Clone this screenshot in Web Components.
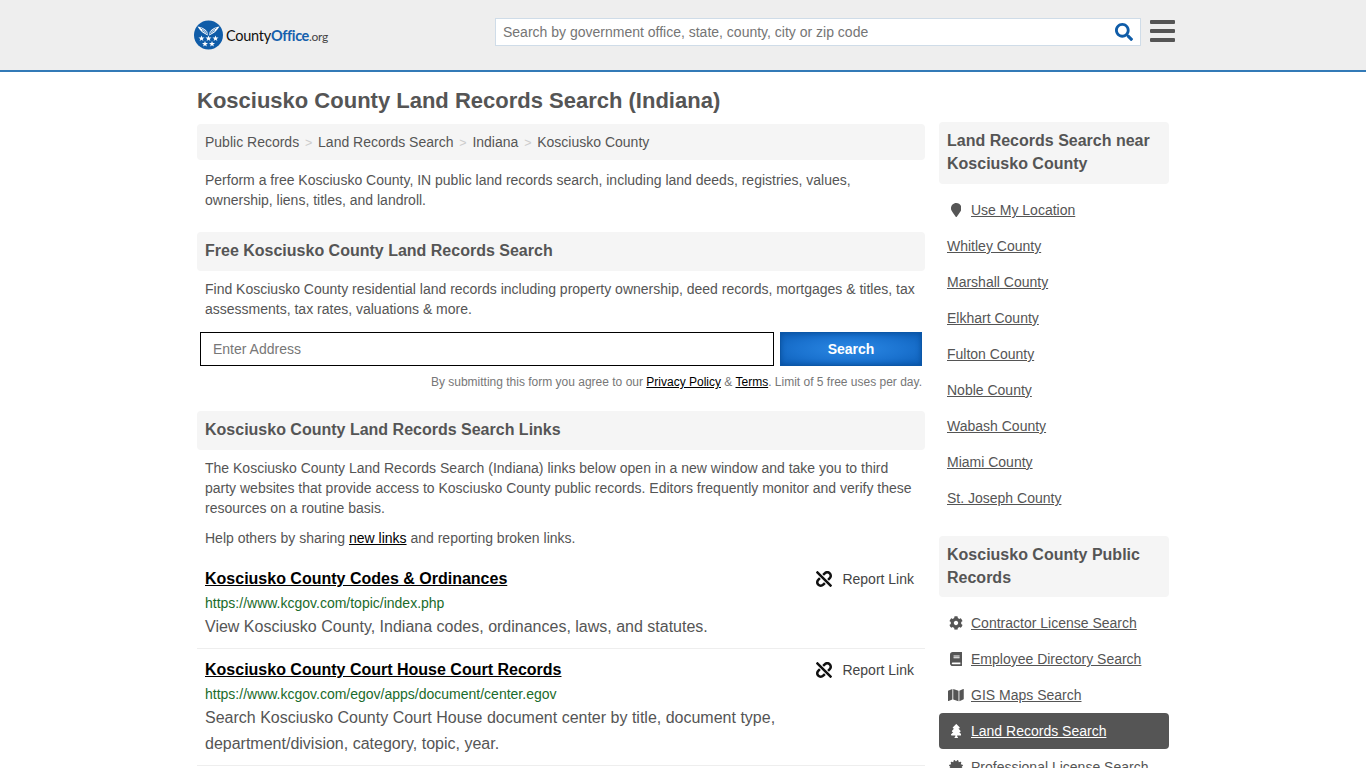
<!DOCTYPE html>
<html lang="en">
<head>
<meta charset="utf-8">
<title>Kosciusko County Land Records Search (Indiana)</title>
<style>
  html, body { margin: 0; padding: 0; overflow: hidden; height: 768px; background: #fff; }
  body { font-family: "Liberation Sans", Arial, sans-serif; font-size: 14px; color: #555; }
</style>
</head>
<body>
<site-header></site-header>
<page-layout>
  <h-title slot="title">Kosciusko County Land Records Search (Indiana)</h-title>

  <bread-crumbs slot="main"></bread-crumbs>
  <text-block slot="main" style="margin-top:10px">Perform a free Kosciusko County, IN public land records search, including land deeds, registries, values, ownership, liens, titles, and landroll.</text-block>

  <section-head slot="main" style="margin-top:22px">Free Kosciusko County Land Records Search</section-head>
  <text-block slot="main" style="margin-top:8px">Find Kosciusko County residential land records including property ownership, deed records, mortgages &amp; titles, tax assessments, tax rates, valuations &amp; more.</text-block>
  <address-form slot="main"></address-form>

  <section-head slot="main" style="margin-top:22px">Kosciusko County Land Records Search Links</section-head>
  <text-block slot="main" style="margin-top:8px">The Kosciusko County Land Records Search (Indiana) links below open in a new window and take you to third party websites that provide access to Kosciusko County public records. Editors frequently monitor and verify these resources on a routine basis.</text-block>
  <text-block slot="main" style="margin-top:10px">Help others by sharing <a href="#" style="color:#000">new links</a> and reporting broken links.</text-block>

  <link-result slot="main" style="margin-top:20px" heading="Kosciusko County Codes &amp; Ordinances" url="https://www.kcgov.com/topic/index.php">View Kosciusko County, Indiana codes, ordinances, laws, and statutes.</link-result>
  <link-result slot="main" heading="Kosciusko County Court House Court Records" url="https://www.kcgov.com/egov/apps/document/center.egov">Search Kosciusko County Court House document center by title, document type, department/division, category, topic, year.</link-result>

  <side-head slot="side">Land Records Search near Kosciusko County</side-head>
  <side-list slot="side" style="margin-top:8px">
    <side-item icon="marker">Use My Location</side-item>
    <side-item>Whitley County</side-item>
    <side-item>Marshall County</side-item>
    <side-item>Elkhart County</side-item>
    <side-item>Fulton County</side-item>
    <side-item>Noble County</side-item>
    <side-item>Wabash County</side-item>
    <side-item>Miami County</side-item>
    <side-item>St. Joseph County</side-item>
  </side-list>
  <side-head slot="side" style="margin-top:20px;padding-bottom:8px">Kosciusko County Public Records</side-head>
  <side-list slot="side" style="margin-top:8px">
    <side-item icon="cog">Contractor License Search</side-item>
    <side-item icon="book">Employee Directory Search</side-item>
    <side-item icon="map">GIS Maps Search</side-item>
    <side-item icon="tree" active>Land Records Search</side-item>
    <side-item icon="cert">Professional License Search</side-item>
  </side-list>
</page-layout>

<script>
// icon paths, all drawn from the same shapes used in the side list and the result rows
const ICONS = {
  marker: ['0 0 384 512', 'M172.268 501.67C26.97 291.031 0 269.413 0 192 0 85.961 85.961 0 192 0s192 85.961 192 192c0 77.413-26.97 99.031-172.268 309.67-9.535 13.774-29.93 13.773-39.464 0z'],
  cog: ['0 0 512 512', 'M487.4 315.7l-42.6-24.6c4.3-23.2 4.3-47 0-70.2l42.6-24.6c4.9-2.8 7.1-8.6 5.5-14-11.1-35.6-30-67.8-54.7-94.6-3.8-4.1-10-5.1-14.8-2.3L380.8 110c-17.9-15.4-38.5-27.3-60.8-35.1V25.8c0-5.6-3.9-10.5-9.4-11.7-36.7-8.2-74.3-7.8-109.2 0-5.5 1.2-9.4 6.1-9.4 11.7V75c-22.2 7.9-42.8 19.8-60.8 35.1L88.7 85.5c-4.9-2.8-11-1.9-14.8 2.3-24.7 26.7-43.6 58.9-54.7 94.6-1.7 5.4.6 11.2 5.5 14L67.3 221c-4.3 23.2-4.3 47 0 70.2l-42.6 24.6c-4.9 2.8-7.1 8.6-5.5 14 11.1 35.6 30 67.8 54.7 94.6 3.8 4.1 10 5.1 14.8 2.3l42.6-24.6c17.9 15.4 38.5 27.3 60.8 35.1v49.2c0 5.6 3.9 10.5 9.4 11.7 36.7 8.2 74.3 7.8 109.2 0 5.5-1.2 9.4-6.1 9.4-11.7v-49.2c22.2-7.9 42.8-19.8 60.8-35.1l42.6 24.6c4.9 2.8 11 1.9 14.8-2.3 24.7-26.7 43.6-58.9 54.7-94.6 1.5-5.5-.7-11.3-5.6-14.1zM256 336c-44.1 0-80-35.9-80-80s35.9-80 80-80 80 35.9 80 80-35.9 80-80 80z'],
  book: ['0 0 448 512', 'M448 360V24c0-13.3-10.7-24-24-24H96C43 0 0 43 0 96v320c0 53 43 96 96 96h328c13.3 0 24-10.7 24-24v-16c0-7.5-3.5-14.3-8.9-18.7-4.2-15.4-4.2-59.3 0-74.7 5.4-4.3 8.9-11.1 8.9-18.6zM128 134c0-3.3 2.7-6 6-6h212c3.3 0 6 2.7 6 6v20c0 3.3-2.7 6-6 6H134c-3.3 0-6-2.7-6-6v-20zm0 64c0-3.3 2.7-6 6-6h212c3.3 0 6 2.7 6 6v20c0 3.3-2.7 6-6 6H134c-3.3 0-6-2.7-6-6v-20zm253.4 250H96c-17.7 0-32-14.3-32-32 0-17.6 14.4-32 32-32h285.4c-1.9 17.1-1.9 46.9 0 64z'],
  map: ['0 0 576 512', 'M0 117.66v346.32c0 11.32 11.43 19.06 21.94 14.86L160 416V32L20.12 87.95A32.006 32.006 0 0 0 0 117.66zM192 416l192 64V96L192 32v384zM554.06 33.16L416 96v384l139.88-55.95A31.996 31.996 0 0 0 576 394.34V48.02c0-11.32-11.43-19.06-21.94-14.86z'],
  tree: ['0 0 384 512', 'M378.31 378.49L298.42 288h30.63c9.01 0 16.98-5 20.78-13.06 3.8-8.04 2.55-17.26-3.28-24.05L268.42 160h28.89c9.1 0 17.3-5.35 20.86-13.61 3.52-8.13 1.86-17.59-4.24-24.08L203.66 4.83c-6.03-6.45-17.28-6.45-23.32 0L70.06 122.31c-6.1 6.49-7.75 15.95-4.24 24.08C69.38 154.65 77.59 160 86.69 160h28.89l-78.14 90.91c-5.81 6.78-7.06 15.99-3.27 24.04C37.97 283 45.93 288 54.95 288h30.63L5.69 378.49c-6 6.79-7.36 16.09-3.56 24.26C5.89 410.85 13.84 416 22.8 416H160v32l-31.24 46.86c-5.32 7.98.4 18.67 9.98 18.67h106.52c9.58 0 15.3-10.69 9.98-18.67L224 448v-32h137.2c8.96 0 16.91-5.15 20.67-13.25 3.8-8.17 2.44-17.47-3.56-24.26z'],
  cert: ['0 0 512 512', 'M458.622 255.92l45.985-45.005c13.708-12.977 7.316-36.039-10.664-40.339l-62.65-15.99 17.661-62.015c4.991-17.838-11.829-34.663-29.661-29.671l-61.994 17.667-15.984-62.671C337.085.197 313.765-6.276 300.99 7.228L256 53.57 211.011 7.229c-12.63-13.351-36.047-7.234-40.325 10.668l-15.984 62.671-61.995-17.667C74.87 57.907 58.056 74.738 63.046 92.572l17.661 62.015-62.65 15.99C.069 174.878-6.31 197.944 7.392 210.915l45.985 45.005-45.985 45.004c-13.708 12.977-7.316 36.039 10.664 40.339l62.65 15.99-17.661 62.015c-4.991 17.838 11.829 34.663 29.661 29.671l61.994-17.667 15.984 62.671c4.439 18.575 27.696 24.018 40.325 10.668L256 458.61l44.989 46.001c12.5 13.488 35.987 7.486 40.325-10.668l15.984-62.671 61.994 17.667c17.836 4.994 34.651-11.837 29.661-29.671l-17.661-62.015 62.65-15.99c17.987-4.302 24.366-27.367 10.664-40.339l-45.984-45.004z'],
  unlink: ['0 0 512 512', 'M304.083 405.907c4.686 4.686 4.686 12.284 0 16.971l-44.674 44.674c-59.263 59.262-155.693 59.266-214.961 0-59.264-59.265-59.264-155.696 0-214.96l44.675-44.675c4.686-4.686 12.284-4.686 16.971 0l39.598 39.598c4.686 4.686 4.686 12.284 0 16.971l-44.675 44.674c-28.072 28.073-28.072 73.75 0 101.823 28.072 28.072 73.75 28.073 101.824 0l44.674-44.674c4.686-4.686 12.284-4.686 16.971 0l39.597 39.598zm-56.568-260.216c4.686 4.686 12.284 4.686 16.971 0l44.674-44.674c28.072-28.075 73.75-28.073 101.824 0 28.072 28.073 28.072 73.75 0 101.823l-44.675 44.674c-4.686 4.686-4.686 12.284 0 16.971l39.598 39.598c4.686 4.686 12.284 4.686 16.971 0l44.675-44.675c59.265-59.265 59.265-155.695 0-214.96-59.266-59.264-155.695-59.264-214.961 0l-44.674 44.674c-4.686 4.686-4.686 12.284 0 16.971l39.597 39.598zm234.828 359.28l22.627-22.627c9.373-9.373 9.373-24.569 0-33.941L63.598 7.029c-9.373-9.373-24.569-9.373-33.941 0L7.029 29.657c-9.373 9.373-9.373 24.569 0 33.941l441.373 441.373c9.373 9.372 24.569 9.372 33.941 0z'],
  search: ['0 0 512 512', 'M505 442.7L405.3 343c-4.5-4.5-10.6-7-17-7H372c27.6-35.3 44-79.7 44-128C416 93.1 322.9 0 208 0S0 93.1 0 208s93.1 208 208 208c48.3 0 92.7-16.4 128-44v16.3c0 6.4 2.5 12.5 7 17l99.7 99.7c9.4 9.4 24.6 9.4 33.9 0l28.3-28.3c9.4-9.4 9.4-24.6.1-34zM208 336c-70.7 0-128-57.2-128-128 0-70.7 57.2-128 128-128 70.7 0 128 57.2 128 128 0 70.7-57.2 128-128 128z']
}

function iconSvg (name, height) {
  const [box, d] = ICONS[name]
  return `<svg viewBox="${box}" height="${height}" fill="currentColor" aria-hidden="true"><path d="${d}"></path></svg>`
}

/**
 * Small helper so every element below only has to give its markup.
 */
class ShadowElement extends HTMLElement {
  constructor () {
    super()
    this.attachShadow({ mode: 'open' })
  }

  render (html) {
    this.shadowRoot.innerHTML = html
  }
}

customElements.define('site-header', class extends ShadowElement {
  connectedCallback () {
    const star = (x, y) => `<polygon transform="translate(${x} ${y})" points="0,-3 .8,-1 3,-1 1.2,.4 1.9,2.6 0,1.3 -1.9,2.6 -1.2,.4 -3,-1 -.8,-1"></polygon>`
    this.render(`
      <style>
        :host { display: block; height: 70px; background: #eee; border-bottom: 2px solid #337ab7; }
        .inner { width: 981px; height: 70px; margin-left: 194px; display: flex; align-items: flex-start; }
        .logo { display: flex; align-items: center; width: 301px; height: 30px; margin-top: 20px; flex: none; text-decoration: none; }
        .logo svg { flex: none; }
        .name { margin: 1px 0 0 3px; font: 14.5px Lato, "Liberation Sans", sans-serif; color: #111; letter-spacing: -.25px; }
        .name b { font-weight: 700; color: #1560ad; letter-spacing: -.4px; }
        .name i { font-style: normal; font-size: 12px; color: #444; }
        .search { display: flex; align-items: center; width: 646px; height: 28px; margin-top: 18px; box-sizing: border-box; background: #fff; border: 1px solid #cfdce8; flex: none; }
        .search span { flex: 1; padding-left: 7px; color: #757575; font-size: 14px; }
        .search svg { color: #0f5ca8; margin-right: 7px; }
        .menu { display: flex; flex-direction: column; gap: 5px; margin: 20px 0 0 9px; width: 25px; }
        .menu i { display: block; height: 4px; background: #555; border-radius: 1px; }
      </style>
      <div class="inner">
        <a class="logo" href="#">
          <svg width="29" height="30" viewBox="0 0 29 30">
            <circle cx="14.5" cy="15" r="14.5" fill="#0f5ca8"></circle>
            <g fill="#fff">
              <path d="M3.5 6.500c3.500 .2 7.500 2 10 5.500l.4 3.500C10 14 6 11 3.500 6.500z"></path>
              <path d="M25.500 6.500c-3.500 .2-7.500 2-10 5.500l-.4 3.500c3.900-1.500 7.900-4.500 10.400-9z"></path>
              ${star(7.500, 18.500)}${star(14.5, 18.500)}${star(21.500, 18.500)}${star(11, 24)}${star(18, 24)}
            </g>
            <path d="M6.500 7.800l7 5M8 10.500l5.500 3.600M22.500 7.800l-7 5M21 10.500l-5.500 3.600" stroke="#0f5ca8" stroke-width=".7" fill="none"></path>
          </svg>
          <span class="name">County<b>Office</b><i>.org</i></span>
        </a>
        <div class="search">
          <span>Search by government office, state, county, city or zip code</span>
          ${iconSvg('search', 18)}
        </div>
        <div class="menu"><i></i><i></i><i></i></div>
      </div>
    `)
  }
})

customElements.define('page-layout', class extends ShadowElement {
  connectedCallback () {
    this.render(`
      <style>
        :host { display: block; width: 972px; margin: 0 auto; }
        .grid { display: grid; grid-template-columns: 728px 230px; column-gap: 14px; }
        .title { grid-column: 1; padding-top: 16px; }
        .main { display: flex; flex-direction: column; }
        .side { display: flex; flex-direction: column; padding-top: 50px; }
      </style>
      <div class="grid">
        <div class="main">
          <div class="title"><slot name="title"></slot></div>
          <slot name="main"></slot>
        </div>
        <div class="side"><slot name="side"></slot></div>
      </div>
    `)
  }
})

customElements.define('h-title', class extends ShadowElement {
  connectedCallback () {
    this.render(`
      <style>
        :host { display: block; height: 36px; font-size: 22px; line-height: 26px; font-weight: 700; color: #555; }
      </style>
      <slot></slot>
    `)
  }
})

customElements.define('bread-crumbs', class extends ShadowElement {
  connectedCallback () {
    const names = ['Public Records', 'Land Records Search', 'Indiana', 'Kosciusko County']
    this.render(`
      <style>
        :host { display: block; background: #f5f5f5; border-radius: 4px; height: 36px; line-height: 36px; padding: 0 8px; font-size: 14px; }
        a { color: #555; text-decoration: none; }
        i { font-style: normal; color: #ccc; padding: 0 5.8px; font-size: 12.5px; }
      </style>
      ${names.map(n => `<a href="#">${n}</a>`).join('<i>&gt;</i>')}
    `)
  }
})

customElements.define('text-block', class extends ShadowElement {
  connectedCallback () {
    this.render(`
      <style>
        :host { display: block; padding: 0 8px; font-size: 14px; line-height: 20px; color: #555; }
      </style>
      <slot></slot>
    `)
  }
})

customElements.define('section-head', class extends ShadowElement {
  connectedCallback () {
    this.render(`
      <style>
        :host { display: block; background: #f5f5f5; border-radius: 4px; padding: 0 8px; height: 39px; line-height: 38px; font-size: 16px; font-weight: 700; color: #555; }
      </style>
      <slot></slot>
    `)
  }
})

customElements.define('address-form', class extends ShadowElement {
  connectedCallback () {
    this.render(`
      <style>
        :host { display: block; margin-top: 13px; padding: 0 3px; }
        .row { display: flex; gap: 6px; height: 34px; }
        .field { flex: 1; box-sizing: border-box; border: 1px solid #000; background: #fff; padding: 0 12px; line-height: 32px; color: #777; font-size: 14px; }
        .go { width: 142px; box-sizing: border-box; border: 1px solid #0b57a8; background: radial-gradient(ellipse at center, #2b88e4 0%, #1b73d0 55%, #0d5fb8 100%); box-shadow: inset 0 0 5px #0a4f9c; color: #fff; font-weight: 700; font-size: 14px; line-height: 32px; text-align: center; }
        .note { margin-top: 9px; text-align: right; font-size: 12px; line-height: 14px; color: #777; }
        .note a { color: #000; }
      </style>
      <div class="row">
        <div class="field">Enter Address</div>
        <div class="go">Search</div>
      </div>
      <div class="note">By submitting this form you agree to our <a href="#">Privacy Policy</a> &amp; <a href="#">Terms</a>. Limit of 5 free uses per day.</div>
    `)
  }
})

customElements.define('link-result', class extends ShadowElement {
  connectedCallback () {
    this.render(`
      <style>
        :host { display: block; padding: 0 8px 8px; margin-bottom: 10px; border-bottom: 1px solid #eee; }
        .top { display: flex; justify-content: space-between; align-items: center; height: 22px; }
        .top a { font-size: 16px; font-weight: 700; color: #000; }
        .report { display: flex; align-items: center; gap: 10px; color: #444; font-size: 14px; padding-right: 3px; }
        .report svg { color: #111; }
        .url { margin-top: 4px; font-size: 14px; line-height: 18px; color: #1a6b2a; }
        .desc { margin-top: 2px; font-size: 16px; line-height: 26px; color: #555; }
      </style>
      <div class="top">
        <a href="#">${this.getAttribute('heading').replace(/&/g, '&amp;')}</a>
        <span class="report">${iconSvg('unlink', 16)}<span>Report Link</span></span>
      </div>
      <div class="url">${this.getAttribute('url')}</div>
      <div class="desc"><slot></slot></div>
    `)
  }
})

customElements.define('side-head', class extends ShadowElement {
  connectedCallback () {
    this.render(`
      <style>
        :host { display: block; background: #f5f5f5; border-radius: 4px; padding: 7px 8px 9px; font-size: 16px; line-height: 23px; font-weight: 700; color: #555; }
      </style>
      <slot></slot>
    `)
  }
})

customElements.define('side-list', class extends ShadowElement {
  connectedCallback () {
    this.render(`
      <style>
        :host { display: flex; flex-direction: column; }
      </style>
      <slot></slot>
    `)
  }
})

customElements.define('side-item', class extends ShadowElement {
  connectedCallback () {
    const icon = this.getAttribute('icon')
    this.render(`
      <style>
        :host { display: flex; align-items: center; height: 36px; padding: 0 8px; border-radius: 4px; font-size: 14px; color: #555; }
        :host([active]) { background: #555; color: #fff; }
        .icon { display: flex; justify-content: center; width: 18px; margin-right: 6px; }
        a { color: inherit; }
      </style>
      ${icon ? `<span class="icon">${iconSvg(icon, 14)}</span>` : ''}
      <a href="#"><slot></slot></a>
    `)
  }
})
</script>
</body>
</html>
